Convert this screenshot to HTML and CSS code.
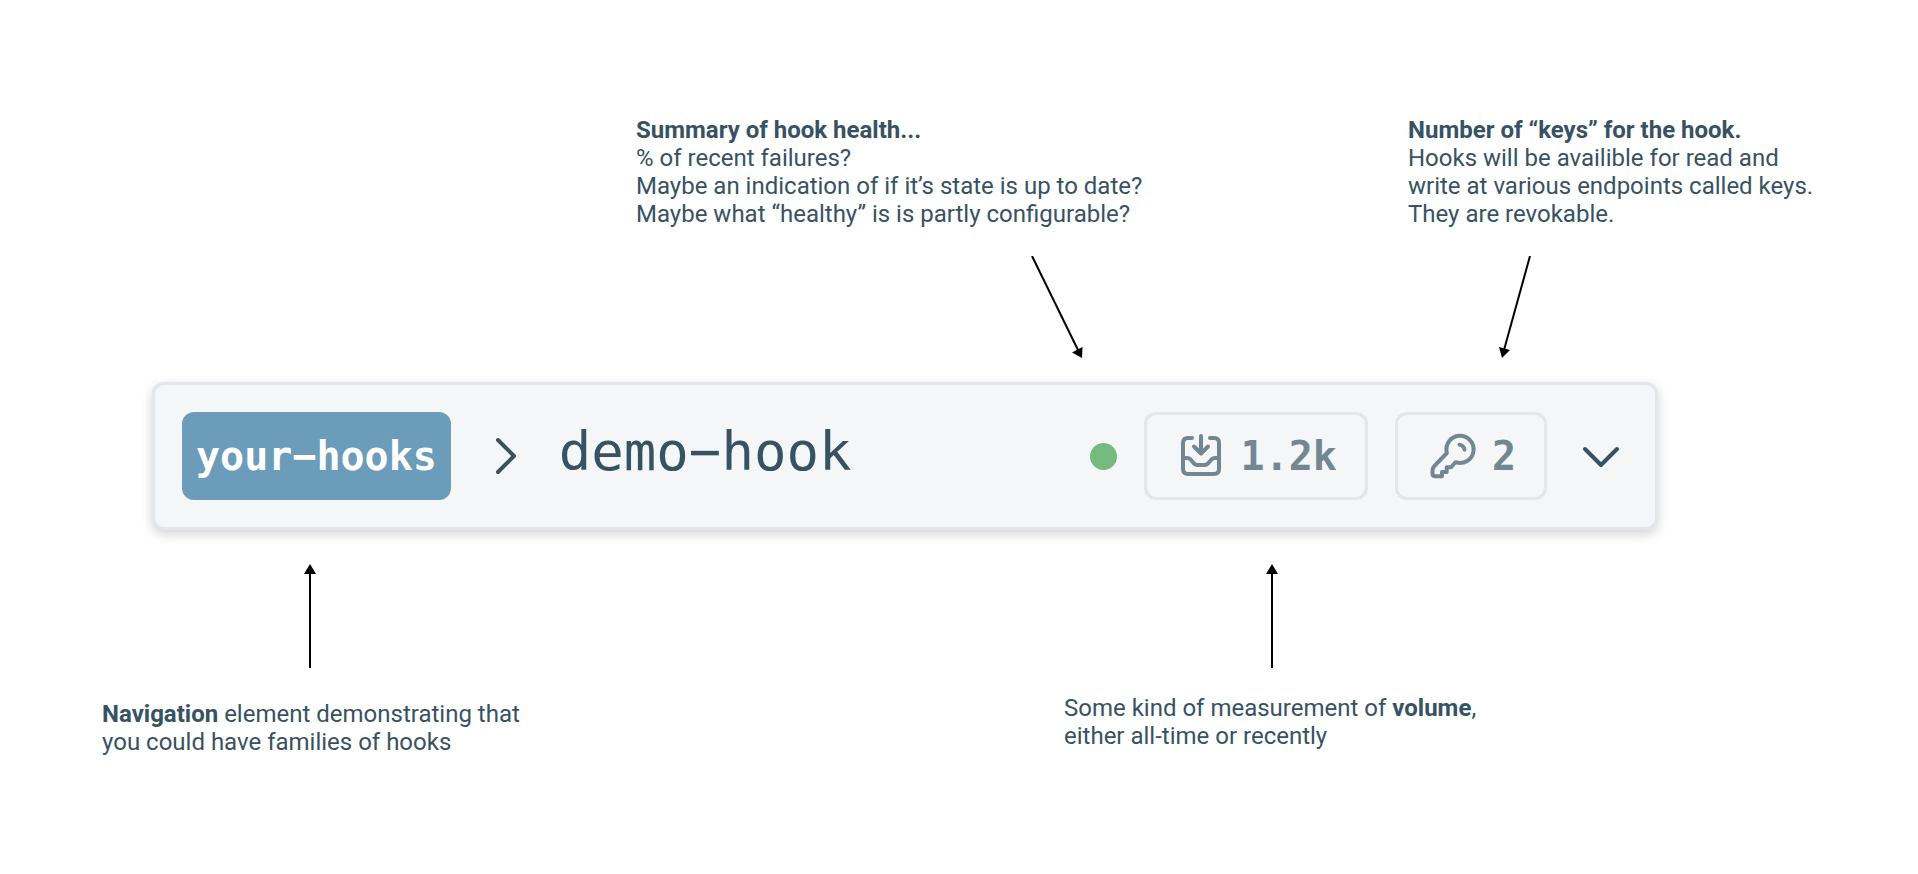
FILE: index.html
```html
<!DOCTYPE html>
<html lang="en">
<head>
<meta charset="utf-8">
<title>demo-hook</title>
<link rel="stylesheet" href="styles.css">
</head>
<body>
<main class="page">
  <div class="notes notes-top">
    <section class="note">
      <p class="note-text"><strong>Summary of hook health...</strong><br>% of recent failures?<br>Maybe an indication of if it’s state is up to date?<br>Maybe what “healthy” is is partly configurable?</p>
      <svg class="arrow arrow-health" width="56" height="102" viewBox="0 0 56 102" aria-hidden="true">
        <path class="arrow-line" d="M1 0 47 94"/>
        <path class="arrow-head" d="M51 102 41 96.500 51.500 91Z"/>
      </svg>
    </section>
    <section class="note">
      <p class="note-text"><strong>Number of “keys” for the hook.</strong><br>Hooks will be availible for read and<br>write at various endpoints called keys.<br>They are revokable.</p>
      <svg class="arrow arrow-keys" width="34" height="102" viewBox="0 0 34 102" aria-hidden="true">
        <path class="arrow-line" d="M32 0 6 94"/>
        <path class="arrow-head" d="M4 102 1 91 12 94Z"/>
      </svg>
    </section>
  </div>

  <header class="bar">
    <nav class="crumbs" aria-label="Hook">
      <a class="family" href="#">your−hooks</a>
      <svg class="chevron" viewBox="0 0 54 54" aria-hidden="true"><path d="M20 11 36 27 20 43"/></svg>
      <h1 class="name">demo−hook</h1>
    </nav>
    <div class="status">
      <span class="dot" role="img" aria-label="Healthy"></span>
      <span class="stat">
        <svg class="icon" viewBox="0 0 48 48" aria-hidden="true">
          <path d="M17 6H13Q8 6 8 11V37Q8 42 13 42H39Q44 42 44 37V11Q44 6 39 6H35"/>
          <path d="M26 4V21M19 14.500 26 21.500 33 14.500"/>
          <path d="M8 26H12Q14 26 15.500 27.500L19 31.500Q20.500 33 22.500 33H29.500Q31.500 33 33 31.500L36.500 27.500Q38 26 40 26H44"/>
        </svg>
        1.2k
      </span>
      <span class="stat">
        <svg class="icon" viewBox="0 0 48 48" aria-hidden="true">
          <path d="M29.500 30.200A13.600 13.600 0 1 0 20.900 21L8.500 33.800Q6.500 35.800 6.500 38V41.500Q6.500 44.300 9.300 44.300H16V40H20.700V35.300H25Z"/>
          <path d="M33.500 12.700A5.500 5.500 0 0 1 38.500 17.700"/>
        </svg>
        2
      </span>
      <button class="expand" type="button" aria-label="Expand">
        <svg class="chevron" viewBox="0 0 54 54" aria-hidden="true"><path d="M11 20 27 36 43 20"/></svg>
      </button>
    </div>
  </header>

  <div class="notes notes-bottom">
    <section class="note">
      <svg class="arrow arrow-up" width="12" height="104" viewBox="0 0 12 104" aria-hidden="true">
        <path class="arrow-line" d="M6 8V104"/>
        <path class="arrow-head" d="M6 0 12 10H0Z"/>
      </svg>
      <p class="note-text note-text-low"><strong>Navigation</strong> element demonstrating that<br>you could have families of hooks</p>
    </section>
    <section class="note">
      <svg class="arrow arrow-up" width="12" height="104" viewBox="0 0 12 104" aria-hidden="true">
        <path class="arrow-line" d="M6 8V104"/>
        <path class="arrow-head" d="M6 0 12 10H0Z"/>
      </svg>
      <p class="note-text">Some kind of measurement of <strong>volume</strong>,<br>either all-time or recently</p>
    </section>
  </div>
</main>
</body>
</html>
```
FILE: styles.css
```css
* {
  box-sizing: border-box;
}

body {
  margin: 0;
  background: #fff;
  color: #375263;
  font-family: Roboto, sans-serif;
  font-size: 24px;
  line-height: 28px;
}

.page {
  padding: 116px 0;
}

.notes {
  display: grid;
}

.notes-top {
  grid-template-columns: 772fr 510fr;
  padding-left: 33.16%;
}

.notes-bottom {
  grid-template-columns: 962fr 854fr;
  padding-left: 5.32%;
}

.note {
  display: flex;
  flex-direction: column;
  align-items: flex-start;
  gap: 28px;
}

.notes-bottom .note {
  gap: 26px;
}

.note-text {
  margin: 0;
  white-space: nowrap;
}

.note-text-low {
  padding-top: 6px;
}

.arrow {
  display: block;
}

.arrow-line {
  fill: none;
  stroke: #000;
  stroke-width: 2;
}

.arrow-health {
  margin-left: 395px;
}

.arrow-keys {
  margin-left: 90px;
}

.arrow-up {
  margin-left: 202px;
}

.bar {
  display: flex;
  align-items: center;
  justify-content: space-between;
  margin: 24px 260px 34px 152px;
  padding: 27px;
  border: 3px solid #e3e6ea;
  border-radius: 12px;
  background: #f4f6f8;
  box-shadow: 0 4px 12px rgba(0, 0, 0, 0.18);
  font-family: "DejaVu Sans Mono", monospace;
}

.crumbs {
  display: flex;
  align-items: baseline;
  gap: 27px;
}

.family {
  padding: 0 14px;
  border-radius: 12px;
  background: #6b9cb9;
  color: #fff;
  font-size: 40px;
  font-weight: 700;
  line-height: 88px;
  text-decoration: none;
}

.name {
  margin: 0;
  font-size: 54px;
  font-weight: 400;
  line-height: 64px;
}

.chevron {
  display: block;
  width: 54px;
  height: 54px;
  align-self: center;
  fill: none;
  stroke: #375263;
  stroke-width: 4;
  stroke-linecap: round;
  stroke-linejoin: round;
}

.status {
  display: flex;
  align-items: center;
  gap: 27px;
}

.dot {
  width: 27px;
  height: 27px;
  border-radius: 50%;
  background: #75ba7e;
}

.stat {
  display: flex;
  align-items: center;
  gap: 18px;
  height: 88px;
  padding: 0 28px;
  border: 3px solid #e3e6ea;
  border-radius: 12px;
  color: #738793;
  font-size: 40px;
  font-weight: 700;
}

.icon {
  width: 48px;
  height: 48px;
  overflow: visible;
  fill: none;
  stroke: currentColor;
  stroke-width: 4;
  stroke-linecap: round;
  stroke-linejoin: round;
}

.expand {
  padding: 0;
  border: 0;
  background: none;
}
```
